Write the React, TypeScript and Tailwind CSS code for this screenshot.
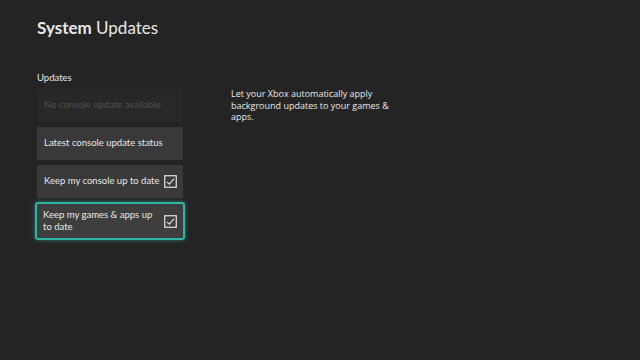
import React from 'react';

function CheckBox() {
  return (
    <svg width="13" height="13" viewBox="0 0 13 13" className="shrink-0">
      <rect x="0.75" y="0.75" width="11.5" height="11.5" fill="none" stroke="#e6e6e6" strokeWidth="1.2" />
      <path d="M3 6.8 L5.4 9.1 L10 3.6" fill="none" stroke="#e6e6e6" strokeWidth="1.1" />
    </svg>
  );
}

export default function App() {
  return (
    <div
      className="w-[640px] h-[360px] bg-[#242424] text-[#e8e8e8] overflow-hidden"
      style={{ fontFamily: '"Open Sans", "Noto Sans", sans-serif' }}
    >
      <div className="pl-[37px] pt-[16px]">
        <h1 className="text-[17px] leading-[24px] font-['Lato',sans-serif]">
          <span className="font-bold">System</span> <span>Updates</span>
        </h1>
      </div>

      <div className="flex pl-[37px] pt-[31px]">
        <div className="w-[146px] font-['Lato',sans-serif]">
          <div className="text-[9.5px] leading-[13px] mb-[5px]">Updates</div>
          <div className="flex flex-col gap-[5px] text-[9.5px]">
            <div className="h-[33px] bg-[#282828] flex items-center px-[7px] text-[#4f4f4f]">
              No console update available
            </div>
            <div className="h-[33px] bg-[#393939] flex items-center px-[7px]">
              Latest console update status
            </div>
            <div className="h-[33px] bg-[#393939] flex items-center justify-between pl-[7px] pr-[6px]">
              <span>Keep my console up to date</span>
              <CheckBox />
            </div>
            <div className="-mx-[2px] mt-[-1px] h-[38px] bg-[#3e3e3e] border-2 border-[#2fb3a3] rounded-[3px] shadow-[0_0_4px_rgba(47,179,163,0.6)] flex items-center justify-between pl-[6px] pr-[6px] leading-[12px]">
              <span className="w-[112px]">Keep my games &amp; apps up to date</span>
              <CheckBox />
            </div>
          </div>
        </div>
        <div className="ml-[48px] pt-[17px] w-[160px] text-[9px] leading-[11.7px]">
          Let your Xbox automatically apply background updates to your games &amp; apps.
        </div>
      </div>
    </div>
  );
}
